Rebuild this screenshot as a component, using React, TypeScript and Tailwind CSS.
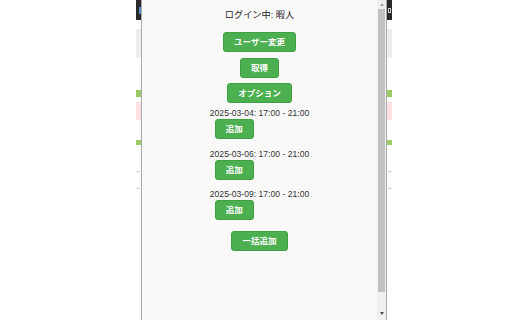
import React from "react";

const slots = [
    { date: "2025-03-04", time: "17:00 - 21:00" },
    { date: "2025-03-06", time: "17:00 - 21:00" },
    { date: "2025-03-09", time: "17:00 - 21:00" },
];

const btn =
    "h-[20px] px-[10px] rounded-[3px] border border-[#3f9f43] bg-[#4caf50] text-white text-[8.5px] font-bold leading-none";

const jp = { fontFamily: "'Liberation Sans', 'Noto Sans CJK JP', sans-serif" };

// background page peeking out at each side of the popup
function Sliver({ right = false }: { right?: boolean }) {
    return (
        <div className="w-[5px] h-[320px] flex flex-col bg-white">
            <div className="h-[20px] bg-[#2a2a2a] flex items-center">
                {right ? (
                    <div className="ml-[1px] w-[3px] h-[5px] border border-[#cfcfcf]" />
                ) : (
                    <div className="ml-[3px] w-[2px] h-[7px] bg-[#5a8fc8]" />
                )}
            </div>
            <div className="h-[9px]" />
            <div className="h-[29px] bg-[#eeeeee]" />
            <div className="h-[32px]" />
            <div className="h-[7px] bg-[#9cca64]" />
            <div className="h-[5px]" />
            <div className="h-[18px] bg-[#fde1e1]" />
            <div className="h-[20px]" />
            <div className="h-[5px] bg-[#9cca64]" />
            <div className="h-[26px]" />
            <div className="h-[1px] w-[3px] ml-[1px] border-t border-dotted border-[#f3a0a0]" />
            <div className="h-[16px]" />
            <div className="h-[1px] w-[3px] ml-[1px] border-t border-dotted border-[#f3a0a0]" />
        </div>
    );
}

function Scrollbar() {
    return (
        <div className="w-[9px] h-[320px] bg-[#f1f1f1] flex flex-col items-center">
            <div className="h-[9px] flex items-center justify-center">
                <div className="w-0 h-0 border-l-[2.5px] border-r-[2.5px] border-b-[3px] border-l-transparent border-r-transparent border-b-[#a3a3a3]" />
            </div>
            <div className="w-[7px] h-[283px] bg-[#c1c1c1]" />
            <div className="flex-1 flex items-end justify-center pb-[5px]">
                <div className="w-0 h-0 border-l-[2.5px] border-r-[2.5px] border-t-[3px] border-l-transparent border-r-transparent border-t-[#505050]" />
            </div>
        </div>
    );
}

export default function App() {
    return (
        <div className="w-[512px] h-[320px] bg-white flex overflow-hidden">
            <div className="w-[136px]" />
            <Sliver />

            <div className="w-[246px] h-[320px] flex border-l border-r border-[#a9a9a9] bg-[#f9f9f9]">
                <div className="flex-1 flex flex-col items-center" style={jp}>
                    <div className="mt-[9px] h-[13px] leading-[13px] text-[9.2px] text-[#222]">
                        ログイン中: 暇人
                    </div>

                    <button className={`${btn} mt-[10px]`}>ユーザー変更</button>
                    <button className={`${btn} mt-[6px]`}>取得</button>
                    <button className={`${btn} mt-[5px]`}>オプション</button>

                    {slots.map((s, i) => (
                        <div
                            key={s.date}
                            className={`flex flex-col items-start ${i === 0 ? "mt-[5px]" : i === 1 ? "mt-[10px]" : "mt-[9px]"}`}
                        >
                            <div
                                className="h-[11px] leading-[11px] text-[8.6px] text-[#333]"
                                style={{ fontFamily: "'Liberation Sans', Arial, sans-serif" }}
                            >
                                {s.date}: {s.time}
                            </div>
                            <button className={`${btn} ml-[5px]`}>追加</button>
                        </div>
                    ))}

                    <button className={`${btn} mt-[11px]`}>一括追加</button>
                </div>
                <Scrollbar />
            </div>

            <Sliver right />
            <div className="flex-1" />
        </div>
    );
}
